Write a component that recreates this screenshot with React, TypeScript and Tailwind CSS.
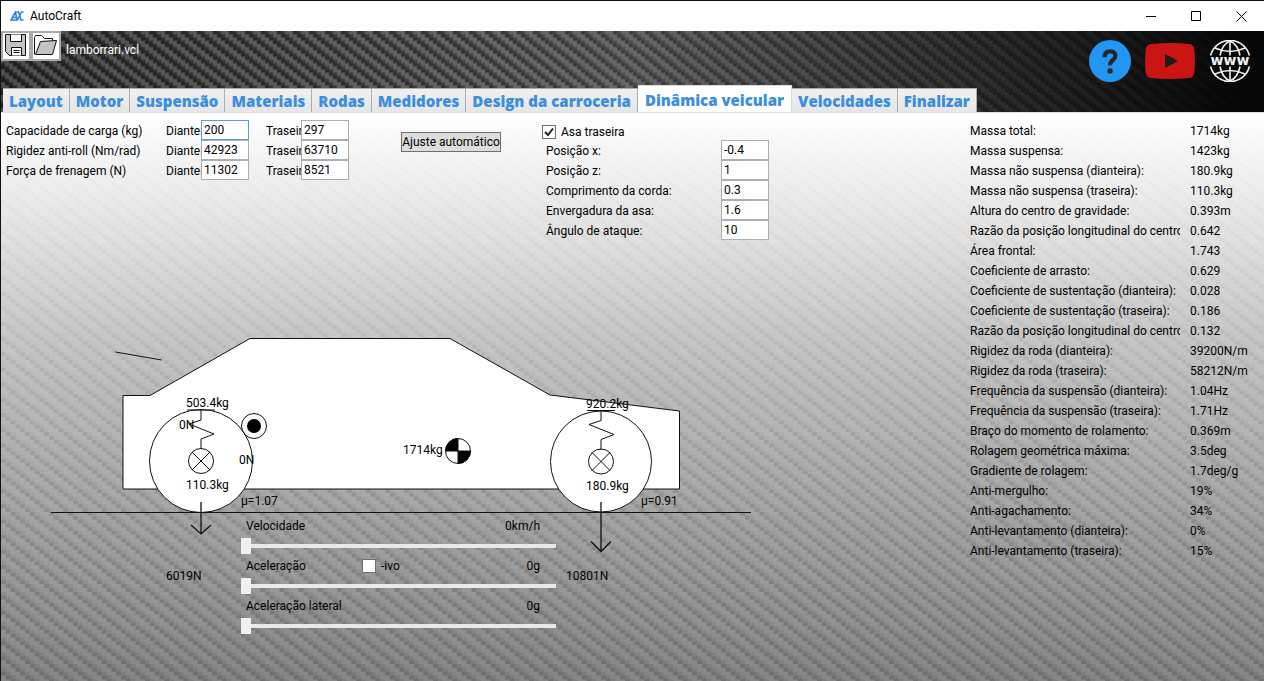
import React, { useState } from "react";

interface ForceRow {
  label: string;
  front: string;
  rear: string;
}

const TABS = [
  "Layout",
  "Motor",
  "Suspensão",
  "Materiais",
  "Rodas",
  "Medidores",
  "Design da carroceria",
  "Dinâmica veicular",
  "Velocidades",
  "Finalizar",
];

const FORCE_ROWS: ForceRow[] = [
  { label: "Capacidade de carga (kg)", front: "200", rear: "297" },
  { label: "Rigidez anti-roll (Nm/rad)", front: "42923", rear: "63710" },
  { label: "Força de frenagem (N)", front: "11302", rear: "8521" },
];

const WING_FIELDS = [
  ["Posição x:", "-0.4"],
  ["Posição z:", "1"],
  ["Comprimento da corda:", "0.3"],
  ["Envergadura da asa:", "1.6"],
  ["Ângulo de ataque:", "10"],
];

const READOUTS = [
  ["Massa total:", "1714kg"],
  ["Massa suspensa:", "1423kg"],
  ["Massa não suspensa (dianteira):", "180.9kg"],
  ["Massa não suspensa (traseira):", "110.3kg"],
  ["Altura do centro de gravidade:", "0.393m"],
  ["Razão da posição longitudinal do centro", "0.642"],
  ["Área frontal:", "1.743"],
  ["Coeficiente de arrasto:", "0.629"],
  ["Coeficiente de sustentação (dianteira):", "0.028"],
  ["Coeficiente de sustentação (traseira):", "0.186"],
  ["Razão da posição longitudinal do centro", "0.132"],
  ["Rigidez da roda (dianteira):", "39200N/m"],
  ["Rigidez da roda (traseira):", "58212N/m"],
  ["Frequência da suspensão (dianteira):", "1.04Hz"],
  ["Frequência da suspensão (traseira):", "1.71Hz"],
  ["Braço do momento de rolamento:", "0.369m"],
  ["Rolagem geométrica máxima:", "3.5deg"],
  ["Gradiente de rolagem:", "1.7deg/g"],
  ["Anti-mergulho:", "19%"],
  ["Anti-agachamento:", "34%"],
  ["Anti-levantamento (dianteira):", "0%"],
  ["Anti-levantamento (traseira):", "15%"],
];

// Carbon fibre texture, tiled over whatever background is behind it
function Weave({ id, stretch, className }: { id: string; stretch?: string; className: string }) {
  return (
    <svg className={`absolute inset-0 h-full w-full pointer-events-none ${className}`} aria-hidden="true">
      <defs>
        <pattern id={id} width="16" height="16" patternUnits="userSpaceOnUse" patternTransform={stretch}>
          <g fill="#fff" fillOpacity="0.4">
            <rect x="0" y="0" width="4" height="8" />
            <rect x="4" y="4" width="4" height="8" />
            <rect x="8" y="8" width="4" height="8" />
            <rect x="12" y="12" width="4" height="4" />
            <rect x="12" y="0" width="4" height="4" />
          </g>
          <g fill="#000" fillOpacity="0.5">
            <rect x="4" y="0" width="4" height="4" />
            <rect x="8" y="4" width="4" height="4" />
            <rect x="12" y="8" width="4" height="4" />
            <rect x="0" y="12" width="4" height="4" />
          </g>
        </pattern>
      </defs>
      <rect width="100%" height="100%" fill={`url(#${id})`} />
    </svg>
  );
}

function TitleBar() {
  return (
    <div className="flex h-[30px] shrink-0 items-center justify-between bg-white">
      <div className="flex items-center gap-[6px] pl-[9px]">
        <svg width="14" height="10" viewBox="0 0 14 10" fill="none" stroke="#2f83dc" strokeWidth="1.6">
          <path d="M1 9 L5.5 1 L7 9 Z M3.5 6.5 H7 M6.5 1 H8.5 L11 9 H13.5 M13.5 1 H11.5 L7.5 9" />
        </svg>
        <h1 className="text-[12px] leading-4">AutoCraft</h1>
      </div>
      <div className="flex h-full">
        <button type="button" aria-label="Minimizar" className="flex h-full w-[45px] items-center justify-center">
          <svg width="11" height="11" viewBox="0 0 11 11" stroke="#000" fill="none">
            <path d="M0 5.5 H10" />
          </svg>
        </button>
        <button type="button" aria-label="Maximizar" className="flex h-full w-[45px] items-center justify-center">
          <svg width="11" height="11" viewBox="0 0 11 11" stroke="#000" fill="none">
            <path d="M0.5 0.5 H9.5 V9.5 H0.5 Z" />
          </svg>
        </button>
        <button type="button" aria-label="Fechar" className="flex h-full w-[45px] items-center justify-center">
          <svg width="11" height="11" viewBox="0 0 11 11" stroke="#000" fill="none">
            <path d="M0.5 0.5 L10.5 10.5 M10.5 0.5 L0.5 10.5" />
          </svg>
        </button>
      </div>
    </div>
  );
}

function FileButtons() {
  return (
    <div className="flex items-start">
      <button type="button" aria-label="Salvar" className="h-[30px] w-[30px] border-2 border-[#a9a9a9] bg-white">
        <svg width="26" height="26" viewBox="0 0 26 26" stroke="#111" strokeWidth="1">
          <path d="M2.5 1.5 H22.5 V22.5 H6.5 L2.5 18.5 Z" fill="#c3c3c3" />
          <path d="M7.5 1.5 V8.5 H18.5 V1.5" fill="#fff" />
          <path d="M8.5 22.5 V14.5 H18.5 V22.5" fill="#fff" />
          <path d="M10.5 17.5 H16.5 M10.5 19.5 H16.5" />
        </svg>
      </button>
      <button type="button" aria-label="Abrir" className="h-[30px] w-[30px] border-2 border-[#a9a9a9] bg-white">
        <svg width="26" height="26" viewBox="0 0 26 26" stroke="#111" strokeWidth="1">
          <path d="M1.5 21.5 V4.5 L2.5 2.5 H8.5 L11.5 5.5 H19.5 V8.5" fill="#fff" />
          <path d="M2.5 21.5 L7.5 8.5 L23.5 7.5 L19.5 21.5 Z" fill="#c3c3c3" />
        </svg>
      </button>
      <span className="pl-[5px] pt-[11px] text-[12px] leading-4 text-white">lamborrari.vcl</span>
    </div>
  );
}

function LinkIcons() {
  return (
    <nav className="flex items-center gap-[14px] pr-[13px] pt-[9px]">
      <a href="#ajuda" aria-label="Ajuda">
        <svg width="42" height="42" viewBox="0 0 42 42">
          <circle cx="21" cy="21" r="21" fill="#2196f3" />
          <path
            d="M15.6 17.2 C15.6 13.2 17.8 11.4 21.2 11.4 C24.6 11.4 26.4 13.2 26.4 15.8 C26.4 20 21 20 21 25.6"
            fill="none"
            stroke="#262626"
            strokeWidth="4.2"
          />
          <circle cx="21" cy="31" r="2.7" fill="#262626" />
        </svg>
      </a>
      <a href="#videos" aria-label="YouTube">
        <svg width="50" height="36" viewBox="0 0 50 36">
          <path
            d="M6 1 Q25 -0.8 44 1 Q49 1.5 49.4 7 Q50.4 18 49.4 29 Q49 34.5 44 35 Q25 36.8 6 35 Q1 34.5 0.6 29 Q-0.4 18 0.6 7 Q1 1.5 6 1 Z"
            fill="#cb1414"
          />
          <path d="M20 11 L33 18 L20 25 Z" fill="#1c1c1c" />
        </svg>
      </a>
      <a href="#site" aria-label="Site">
        <svg width="42" height="42" viewBox="0 0 42 42" fill="none" stroke="#f2f2f2" strokeWidth="1.6">
          <path d="M1.6 15.5 A20 20 0 0 1 40.4 15.5 M1.6 26.5 A20 20 0 0 0 40.4 26.5" />
          <path d="M21 1 V15.5 M21 26.5 V41" />
          <path d="M11 15.5 C12.5 8 16 3 21 1 C26 3 29.5 8 31 15.5 M11 26.5 C12.5 34 16 39 21 41 C26 39 29.5 34 31 26.5" />
          <path d="M6 8 Q21 15 36 8 M6 34 Q21 27 36 34" />
          <text
            x="21"
            y="24.5"
            textAnchor="middle"
            fill="#f2f2f2"
            stroke="none"
            fontSize="14"
            fontWeight="700"
            fontFamily="'DejaVu Sans', sans-serif"
          >
            www
          </text>
        </svg>
      </a>
    </nav>
  );
}

function TabBar({ active, onSelect }: { active: string; onSelect: (tab: string) => void }) {
  return (
    <div
      role="tablist"
      className="relative flex items-end pl-[2px] font-['Open_Sans','Noto_Sans',sans-serif] text-[15px] font-extrabold text-[#3c8ede]"
    >
      {TABS.map((tab) => (
        <button
          key={tab}
          type="button"
          role="tab"
          aria-selected={tab === active}
          onClick={() => onSelect(tab)}
          className={`whitespace-nowrap border-t border-r ${
            tab === active
              ? "h-[28px] -mb-px px-[7px] bg-white border-[#d9d9d9]"
              : "h-[24px] px-[6px] bg-linear-to-b from-[#f0f0f0] to-[#e6e6e6] border-[#acacac]"
          }`}
        >
          {tab}
        </button>
      ))}
    </div>
  );
}

function NumberBox({ label, value, focused }: { label: string; value: string; focused?: boolean }) {
  return (
    <input
      type="text"
      aria-label={label}
      defaultValue={value}
      className={`h-5 w-12 shrink-0 border bg-white pl-[2px] leading-4 outline-none ${
        focused ? "border-[#569de5]" : "border-[#abadb3]"
      }`}
    />
  );
}

function CheckBox({ label, defaultChecked }: { label: string; defaultChecked?: boolean }) {
  return (
    <label className="flex items-center gap-[5px]">
      <span className="relative flex h-[14px] w-[14px]">
        <input
          type="checkbox"
          defaultChecked={defaultChecked}
          className="peer h-[14px] w-[14px] appearance-none border border-[#707070] bg-white"
        />
        <svg
          viewBox="0 0 14 14"
          className="pointer-events-none absolute inset-0 hidden h-[14px] w-[14px] peer-checked:block"
          fill="none"
          stroke="#212121"
          strokeWidth="2"
        >
          <path d="M3 7 L6 10 L11 3.5" />
        </svg>
      </span>
      {label}
    </label>
  );
}

function Wheel({ x, y, radius }: { x: number; y: number; radius: number }) {
  return (
    <g>
      <circle cx={x} cy={y} r={radius} fill="#fff" />
      <path d={`M${x - 14} ${y - 51} h28 M${x} ${y - 51} v10 l-12 4 l25 10 l-13 5 v10`} />
      <circle cx={x} cy={y} r="12.5" />
      <path d={`M${x - 9} ${y - 9} l18 18 M${x + 9} ${y - 9} l-18 18`} />
    </g>
  );
}

function CarDiagram() {
  return (
    <svg width="702" height="254" viewBox="50 336 702 254" fill="none" stroke="#111" className="block">
      <path d="M115.5 352 L161.5 360" />
      <path d="M123 395.5 H150 L250 338.5 H450 L550 395 L679.5 411 V489 H123 Z" fill="#fff" />
      <Wheel x={201} y={461} radius={51.5} />
      <Wheel x={601} y={461.5} radius={50.5} />
      <circle cx="254" cy="426" r="12.5" />
      <circle cx="254" cy="426" r="7" fill="#000" stroke="none" />
      <path d="M51 512.5 H751" />
      <path d="M201 502 V534 M191 525 L201 534 L211 525" strokeWidth="1.3" />
      <path d="M601 502 V551.5 M591 541.5 L601 551.5 L611 541.5" strokeWidth="1.3" />
      <circle cx="458" cy="451" r="12.5" fill="#fff" />
      <path d="M458 451 V438.5 A12.5 12.5 0 0 0 445.5 451 Z M458 451 V463.5 A12.5 12.5 0 0 0 470.5 451 Z" fill="#000" />
      <g fill="#000" stroke="none" className="text-[12px]">
        <text x="186" y="407">503.4kg</text>
        <text x="179" y="429">0N</text>
        <text x="239" y="464">0N</text>
        <text x="186" y="489">110.3kg</text>
        <text x="403" y="454">1714kg</text>
        <text x="586" y="408">920.2kg</text>
        <text x="586" y="490">180.9kg</text>
        <text x="241" y="505">µ=1.07</text>
        <text x="641" y="505">µ=0.91</text>
        <text x="166" y="580">6019N</text>
        <text x="566" y="580">10801N</text>
      </g>
    </svg>
  );
}

interface SliderRowProps {
  id: string;
  label: string;
  unit: string;
  children?: React.ReactNode;
}

function SliderRow({ id, label, unit, children }: SliderRowProps) {
  const [value, setValue] = useState(0);

  return (
    <div>
      <div className="flex h-5 items-center pl-[5px] pr-4">
        <label htmlFor={id} className="w-[116px]">
          {label}
        </label>
        {children}
        <span className="ml-auto">
          {value}
          {unit}
        </span>
      </div>
      <input
        id={id}
        type="range"
        min={0}
        max={100}
        value={value}
        onChange={(e) => setValue(Number(e.target.value))}
        className="block h-5 w-full appearance-none bg-transparent [&::-webkit-slider-runnable-track]:h-1 [&::-webkit-slider-runnable-track]:bg-[#e7eaea] [&::-webkit-slider-thumb]:-mt-[6px] [&::-webkit-slider-thumb]:h-4 [&::-webkit-slider-thumb]:w-[10px] [&::-webkit-slider-thumb]:appearance-none [&::-webkit-slider-thumb]:bg-[#f0f0f0]"
      />
    </div>
  );
}

export default function App() {
  const [activeTab, setActiveTab] = useState("Dinâmica veicular");

  return (
    <div className="flex min-h-screen flex-col border-l border-t border-[#111] font-[Roboto,'Noto_Sans',sans-serif] text-[12px] leading-4 text-black">
      <TitleBar />

      <header className="relative flex h-[81px] shrink-0 flex-col justify-between bg-linear-to-r from-[#262626] via-[#4c4c4c] via-50% to-[#050505]">
        <Weave id="weave-dark" stretch="scale(1 0.8)" className="opacity-45 mask-r-from-40% mask-r-to-100%" />
        <div className="relative flex h-[54px] items-start justify-between">
          <FileButtons />
          <LinkIcons />
        </div>
        <TabBar active={activeTab} onSelect={setActiveTab} />
      </header>

      <main className="relative flex flex-1 justify-between border-t border-[#e0e0e0] bg-[linear-gradient(to_bottom,#ffffff_0%,#e6e6e6_18%,#c2c2c2_41%,#969696_77%,#7b7b7b_100%)]">
        <Weave id="weave-light" stretch="scale(1.2 0.95)" className="opacity-20 mask-t-from-20% mask-t-to-100%" />

        <div className="relative flex flex-col">
          <div className="flex items-start pl-[5px] pt-[7px]">
            <div className="leading-[18px]">
              {FORCE_ROWS.map((row, i) => (
                <div key={row.label} className="flex h-5 items-end">
                  <span className="w-40">{row.label}</span>
                  <span className="w-[35px] overflow-hidden">Dianteira:</span>
                  <NumberBox label={`${row.label} dianteira`} value={row.front} focused={i === 0} />
                  <span className="ml-[17px] w-[35px] overflow-hidden">Traseira:</span>
                  <NumberBox label={`${row.label} traseira`} value={row.rear} />
                </div>
              ))}
            </div>

            <button
              type="button"
              className="ml-[52px] mt-3 h-5 w-[100px] whitespace-nowrap border border-[#707070] bg-[#dddddd]"
            >
              <span className="flex justify-center">Ajuste automático</span>
            </button>

            <div className="ml-[41px] pt-1">
              <CheckBox label="Asa traseira" defaultChecked />
              <div className="pl-1 leading-[18px]">
                {WING_FIELDS.map(([label, value]) => (
                  <div key={label} className="flex h-5 items-end">
                    <span className="w-[175px]">{label}</span>
                    <NumberBox label={label} value={value} />
                  </div>
                ))}
              </div>
            </div>
          </div>

          <div className="relative ml-[49px] mt-24">
            <CarDiagram />
            <div className="absolute left-[191px] top-[180px] w-[315px]">
              <SliderRow id="velocidade" label="Velocidade" unit="km/h" />
              <SliderRow id="aceleracao" label="Aceleração" unit="g">
                <CheckBox label="-ivo" />
              </SliderRow>
              <SliderRow id="aceleracao-lateral" label="Aceleração lateral" unit="g" />
            </div>
          </div>
        </div>

        <table className="relative mt-2 w-[294px] shrink-0 table-fixed self-start text-left">
          <tbody>
            {READOUTS.map(([label, value], i) => (
              <tr key={i} className="h-5">
                <th scope="row" className="w-[220px] p-0 font-normal">
                  <div className="w-[210px] overflow-hidden whitespace-nowrap">{label}</div>
                </th>
                <td className="p-0">{value}</td>
              </tr>
            ))}
          </tbody>
        </table>
      </main>
    </div>
  );
}
